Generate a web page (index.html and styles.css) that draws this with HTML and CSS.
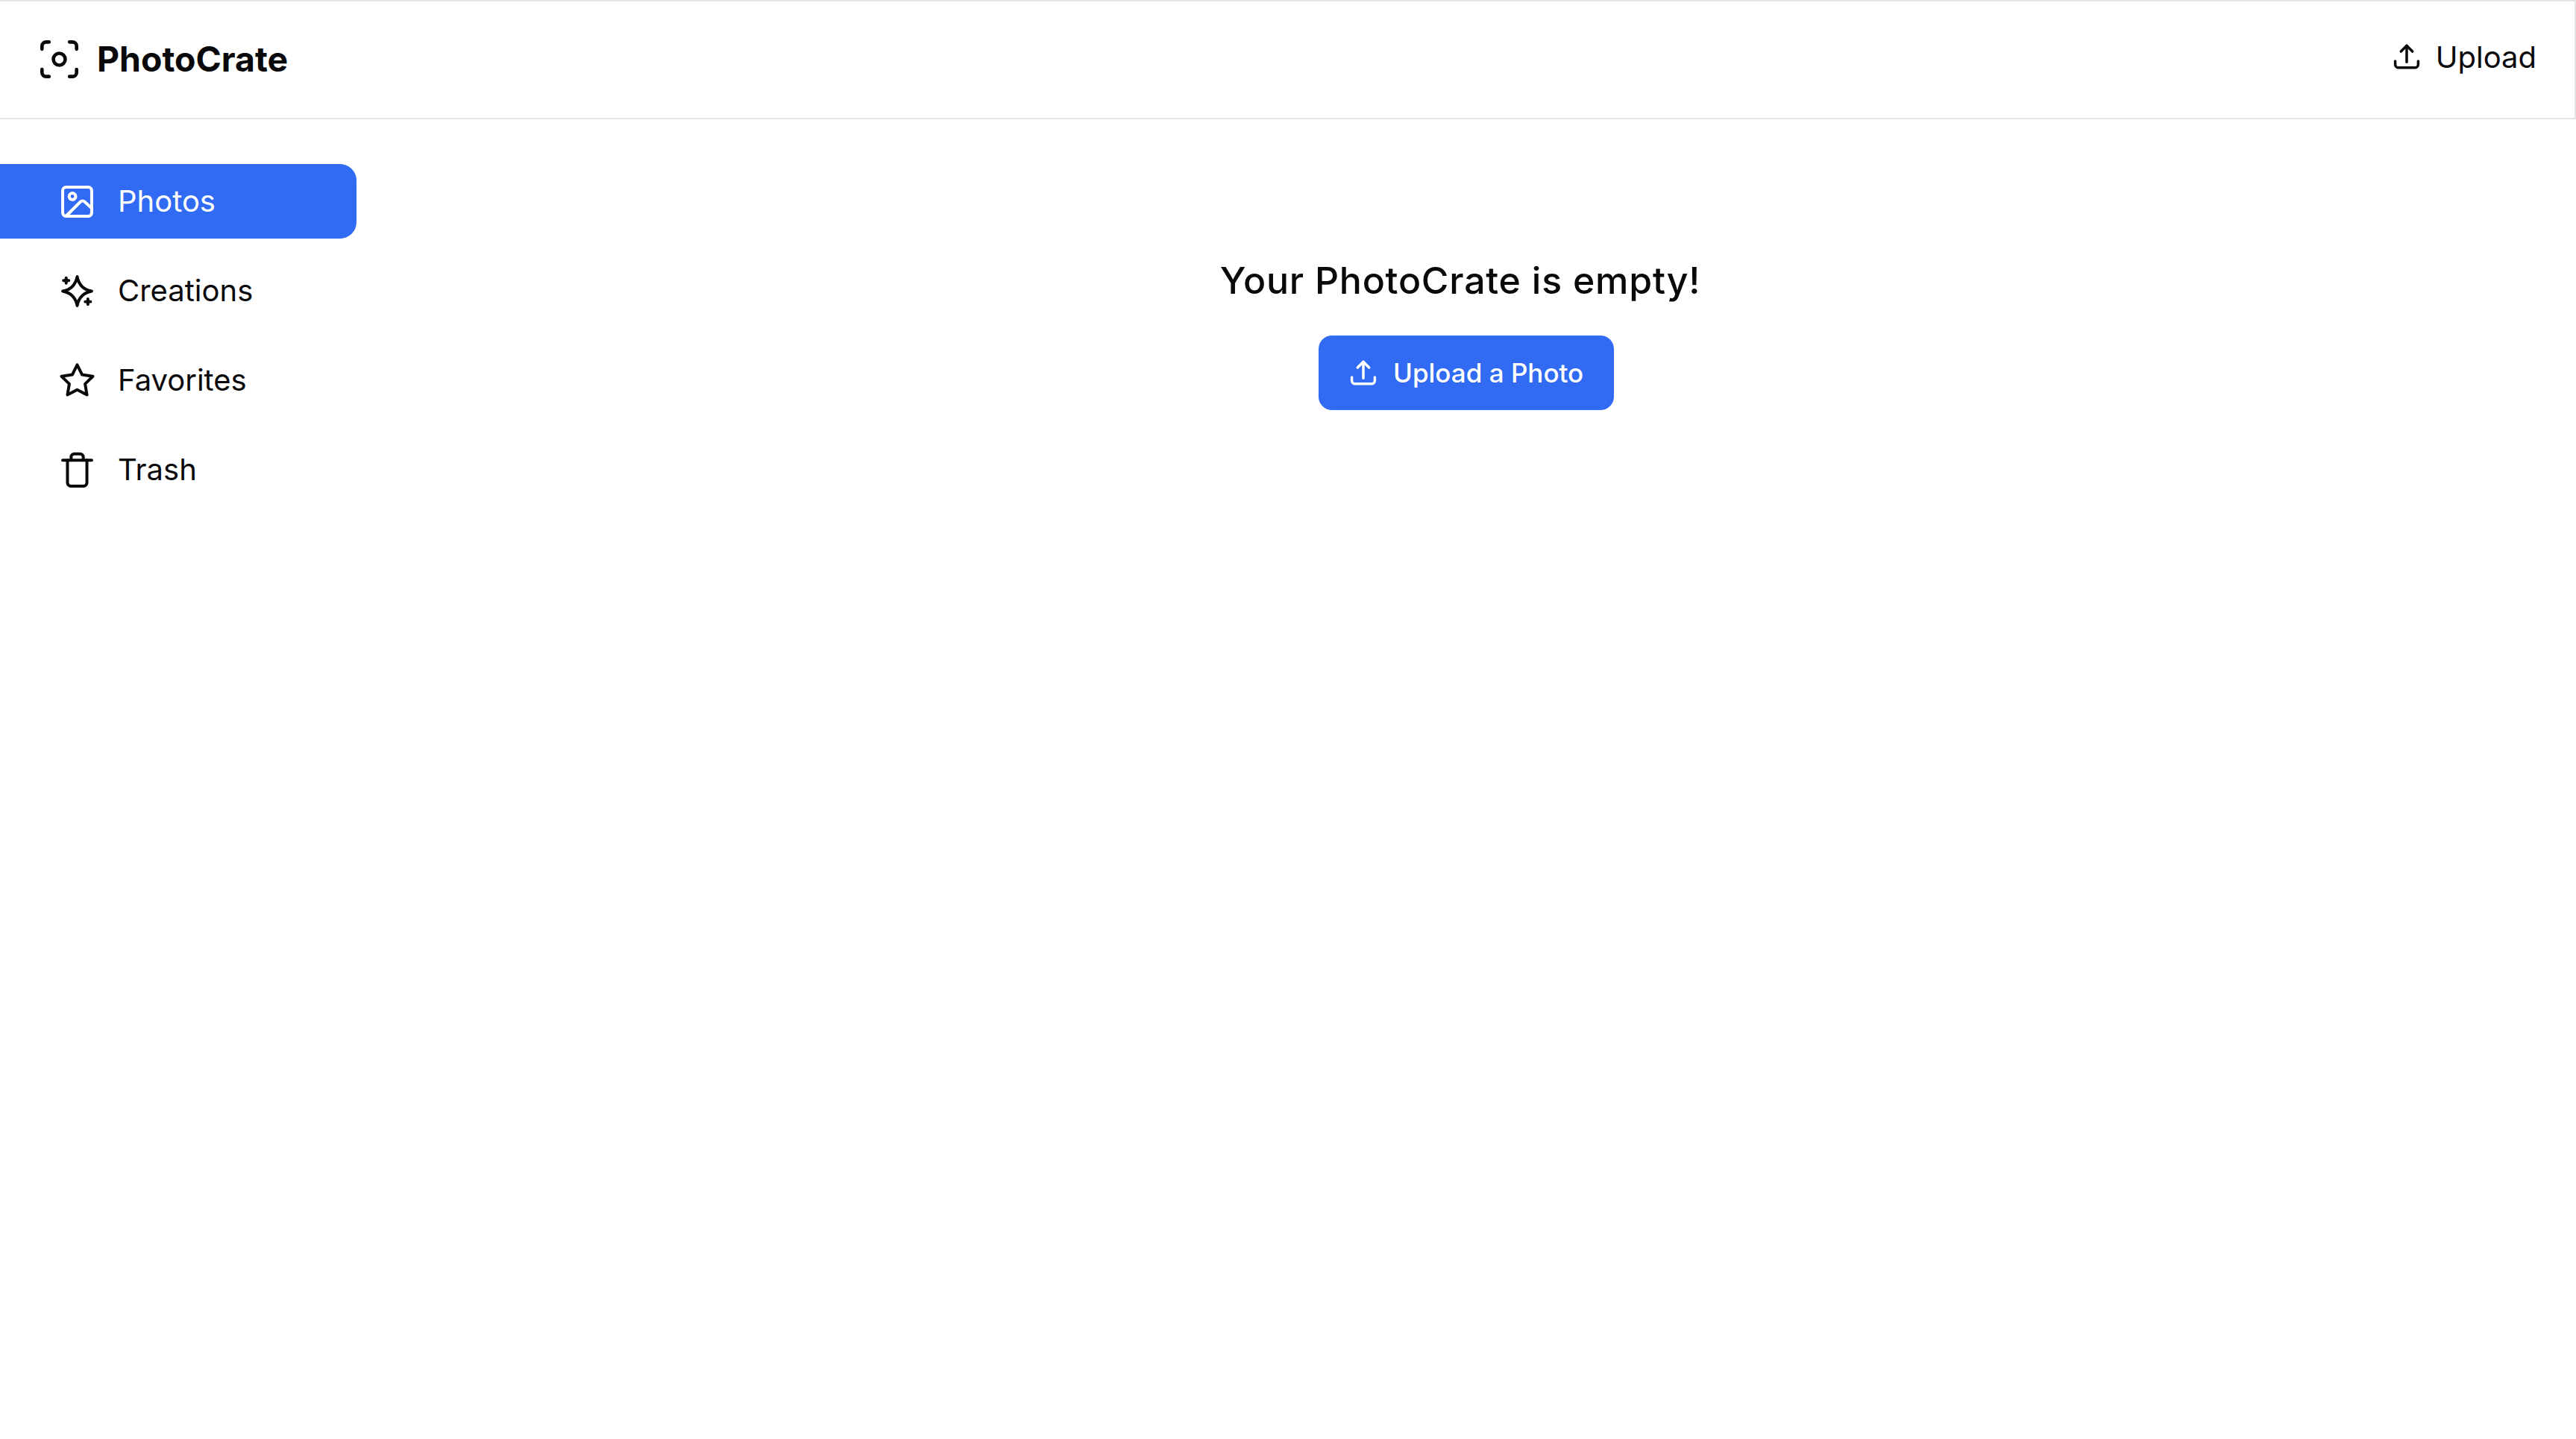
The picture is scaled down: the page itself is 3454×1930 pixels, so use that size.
FILE: index.html
```html
<!DOCTYPE html>
<html lang="en">

<head>
    <meta charset="UTF-8">
    <title>PhotoCrate</title>
    <link rel="stylesheet" href="styles.css">
</head>

<body>
    <header class="header">
        <div class="logo">
            <svg class="logo-icon" viewBox="0 0 24 24">
                <path d="M1.5 5.800V4A2.500 2.500 0 0 1 4 1.500h1.800" />
                <path d="M18.200 1.500H20A2.500 2.500 0 0 1 22.500 4v1.800" />
                <path d="M22.500 18.200V20a2.500 2.500 0 0 1-2.500 2.500h-1.800" />
                <path d="M5.800 22.500H4A2.500 2.500 0 0 1 1.500 20v-1.800" />
                <circle cx="12" cy="12" r="3.600" />
            </svg>
            <span>PhotoCrate</span>
        </div>
        <div class="header-upload">
            <svg class="upload-icon" viewBox="0 0 24 24">
                <path d="M3.600 15.200v2.400a2.500 2.500 0 0 0 2.500 2.500h11.800a2.500 2.500 0 0 0 2.500-2.500v-2.400" />
                <path d="M12 16V4" />
                <path d="M7.800 8.200 12 4l4.200 4.200" />
            </svg>
            <span>Upload</span>
        </div>
    </header>

    <div class="container">
        <ul class="sidebar">
            <li class="active">
                <svg class="nav-icon" viewBox="0 0 24 24">
                    <rect x="3.200" y="3.200" width="17.600" height="17.600" rx="2" />
                    <circle cx="9.100" cy="8.800" r="2" />
                    <path d="M5.500 20.500 14 12a1.800 1.800 0 0 1 2.500 0l4.300 4" />
                </svg>
                Photos
            </li>
            <li>
                <svg class="nav-icon" viewBox="0 0 24 24">
                    <path d="M12 3.200Q13.400 10.600 20.800 12 13.400 13.400 12 20.800 10.600 13.400 3.200 12 10.600 10.600 12 3.200Z" />
                    <path d="M5.300 3.900v3.200M3.700 5.500h3.200" />
                    <path d="M18.500 16.800V20M16.900 18.400h3.200" />
                </svg>
                Creations
            </li>
            <li>
                <svg class="nav-icon" viewBox="0 0 24 24">
                    <polygon points="12,2.400 15,8.400 21.500,9.400 16.800,14 17.900,20.600 12,17.500 6.100,20.600 7.200,14 2.500,9.400 9,8.400" />
                </svg>
                Favorites
            </li>
            <li>
                <svg class="nav-icon" viewBox="0 0 24 24">
                    <path d="M3.200 6h17.600" />
                    <path d="M8.300 6V4.100a2 2 0 0 1 2-2h3.400a2 2 0 0 1 2 2V6" />
                    <path d="M6.100 6v13.700a2 2 0 0 0 2 2h7.800a2 2 0 0 0 2-2V6" />
                </svg>
                Trash
            </li>
        </ul>

        <div class="content">
            <h2>Your PhotoCrate is empty!</h2>
            <button class="upload-button">
                <svg class="upload-icon" viewBox="0 0 24 24">
                    <path d="M3.600 15.200v2.400a2.500 2.500 0 0 0 2.500 2.500h11.800a2.500 2.500 0 0 0 2.500-2.500v-2.400" />
                    <path d="M12 16V4" />
                    <path d="M7.800 8.200 12 4l4.200 4.200" />
                </svg>
                Upload a Photo
            </button>
        </div>
    </div>
</body>

</html>
```

FILE: styles.css
```css
* {
    box-sizing: border-box;
}

body {
    font-family: 'Inter', sans-serif;
    background-color: #ffffff;
    color: #09090b;
    margin: 0;
    padding: 0;
}

svg {
    fill: none;
    stroke: currentColor;
    stroke-linecap: round;
    stroke-linejoin: round;
    flex-shrink: 0;
}

.header {
    display: flex;
    justify-content: space-between;
    align-items: center;
    height: 160px;
    padding: 0 51px 0 53px;
    border: 2px solid #e4e4e7;
    border-left: none;
}

.logo {
    display: flex;
    align-items: center;
    gap: 24px;
    font-size: 46.4px;
    font-weight: 700;
    margin-top: -2px;
}

.logo-icon {
    width: 53px;
    height: 53px;
    stroke-width: 2.1;
}

.upload-icon {
    width: 44px;
    height: 44px;
    stroke-width: 1.9;
}

.header-upload {
    display: flex;
    align-items: center;
    gap: 17px;
    font-size: 40px;
    margin-top: -8px;
}

.container {
    display: flex;
}

.sidebar {
    list-style: none;
    margin: 0;
    padding: 60px 0 0;
    width: 478px;
    display: flex;
    flex-direction: column;
    gap: 20px;
}

.sidebar li {
    display: flex;
    align-items: center;
    gap: 28px;
    height: 100px;
    padding-left: 77px;
    font-size: 40px;
    line-height: 48px;
    border-radius: 0 22px 22px 0;
}

.sidebar li.active {
    background-color: #316bf3;
    color: #ffffff;
}

.nav-icon {
    width: 53px;
    height: 53px;
    stroke-width: 1.8;
}

.content {
    flex: 1;
    display: flex;
    flex-direction: column;
    align-items: center;
    padding-top: 180px;
}

.content h2 {
    margin: 0 16px 38px 0;
    font-size: 50px;
    font-weight: 450;
    letter-spacing: 0.76px;
    line-height: 72px;
}

.upload-button {
    display: flex;
    align-items: center;
    gap: 18px;
    height: 100px;
    width: 396px;
    padding: 0 0 0 38px;
    border: none;
    border-radius: 18px;
    background-color: #316bf3;
    color: #ffffff;
    font-family: inherit;
    font-size: 35px;
    font-weight: 500;
}
```
